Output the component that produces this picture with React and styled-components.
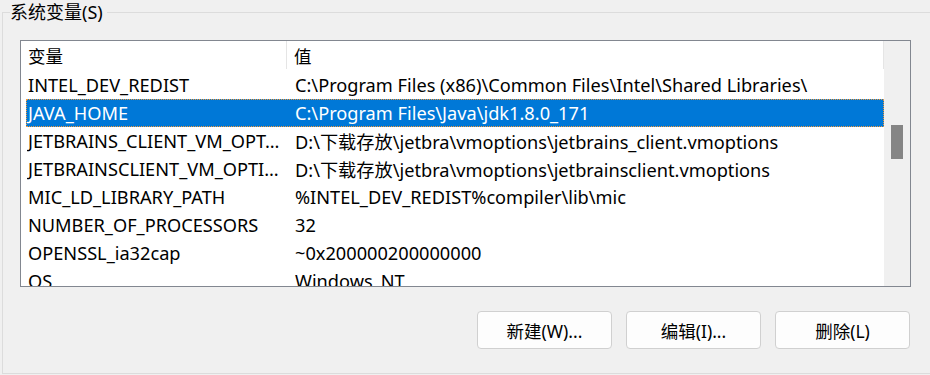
import styled, { createGlobalStyle } from "styled-components";

const GlobalStyle = createGlobalStyle`
    html, body {
        margin: 0;
        padding: 0;
        background: #f0f0f0;
        overflow: hidden;
    }
    body {
        width: 930px;
        height: 375px;
        font-family: "Noto Sans", "Noto Sans CJK SC", sans-serif;
        color: #000;
    }
`;

const variables = [
    ["INTEL_DEV_REDIST", "C:\\Program Files (x86)\\Common Files\\Intel\\Shared Libraries\\"],
    ["JAVA_HOME", "C:\\Program Files\\Java\\jdk1.8.0_171"],
    ["JETBRAINS_CLIENT_VM_OPT…", "D:\\下载存放\\jetbra\\vmoptions\\jetbrains_client.vmoptions"],
    ["JETBRAINSCLIENT_VM_OPTI…", "D:\\下载存放\\jetbra\\vmoptions\\jetbrainsclient.vmoptions"],
    ["MIC_LD_LIBRARY_PATH", "%INTEL_DEV_REDIST%compiler\\lib\\mic"],
    ["NUMBER_OF_PROCESSORS", "32"],
    ["OPENSSL_ia32cap", "~0x200000200000000"],
    ["OS", "Windows_NT"],
];

const App = () => {
    return (
        <>
            <GlobalStyle />
            <GroupBox>
                <GroupTitle>系统变量(S)</GroupTitle>
                <ListView>
                    <ListContent>
                        <Header>
                            <HeaderCell>变量</HeaderCell>
                            <HeaderCell>值</HeaderCell>
                        </Header>
                        {variables.map(([name, value]) => (
                            <Row key={name} selected={name === "JAVA_HOME"}>
                                <Cell>{name}</Cell>
                                <Cell>{value}</Cell>
                            </Row>
                        ))}
                    </ListContent>
                    <ScrollBar>
                        <Thumb />
                    </ScrollBar>
                </ListView>
                <ButtonRow>
                    <Button>新建(W)...</Button>
                    <Button>编辑(I)...</Button>
                    <Button>删除(L)</Button>
                </ButtonRow>
            </GroupBox>
        </>
    );
};

export default App;

const GroupBox = styled.fieldset`
    margin: 0 0 0 2px;
    padding: 16px 0 0 17px;
    width: 960px;
    height: 374px;
    border: 1px solid #dcdcdc;
    box-sizing: border-box;
    min-width: 0;
`;

const GroupTitle = styled.legend`
    padding: 0 4px 0 0;
    margin-left: -10px;
    font-size: 18px;
    line-height: 24px;
    background: #f0f0f0;
`;

const ListView = styled.div`
    display: flex;
    width: 891px;
    height: 247px;
    box-sizing: border-box;
    border: 1px solid #828790;
    background: #fff;
    overflow: hidden;
`;

const ListContent = styled.div`
    flex: 1;
    display: flex;
    flex-direction: column;
    overflow: hidden;
`;

const Header = styled.div`
    display: grid;
    grid-template-columns: 266px 1fr;
    height: 30px;
    flex-shrink: 0;
    font-size: 17.5px;
`;

const HeaderCell = styled.div`
    display: flex;
    align-items: center;
    padding-left: 7px;
    border-right: 1px solid #e5e5e5;
    margin: 0 0 2px;
`;

const Row = styled.div`
    display: grid;
    grid-template-columns: 267px 1fr;
    flex-shrink: 0;
    height: 28px;
    margin-left: 5px;
    box-sizing: border-box;
    font-size: 18.2px;
    background: ${(p) => (p.selected ? "#0078d7" : "transparent")};
    color: ${(p) => (p.selected ? "#fff" : "#000")};
    border: 1px dotted ${(p) => (p.selected ? "#f39a3a" : "transparent")};
`;

const Cell = styled.div`
    display: flex;
    align-items: center;
    padding-left: 1px;
    white-space: nowrap;
    overflow: hidden;
`;

const ScrollBar = styled.div`
    width: 26px;
    flex-shrink: 0;
    background: #f0f0f0;
    display: flex;
    flex-direction: column;
    padding: 84px 0 0 7px;
    box-sizing: border-box;
`;

const Thumb = styled.div`
    width: 12px;
    height: 34px;
    background: #858585;
`;

const ButtonRow = styled.div`
    display: flex;
    justify-content: flex-end;
    gap: 14px;
    width: 890px;
    margin-top: 24px;
`;

const Button = styled.button`
    width: 135px;
    height: 38px;
    border: 1px solid #d0d0d0;
    border-radius: 4px;
    background: #fdfdfd;
    font-family: inherit;
    font-size: 17.5px;
    color: #000;
    padding: 0;
`;
